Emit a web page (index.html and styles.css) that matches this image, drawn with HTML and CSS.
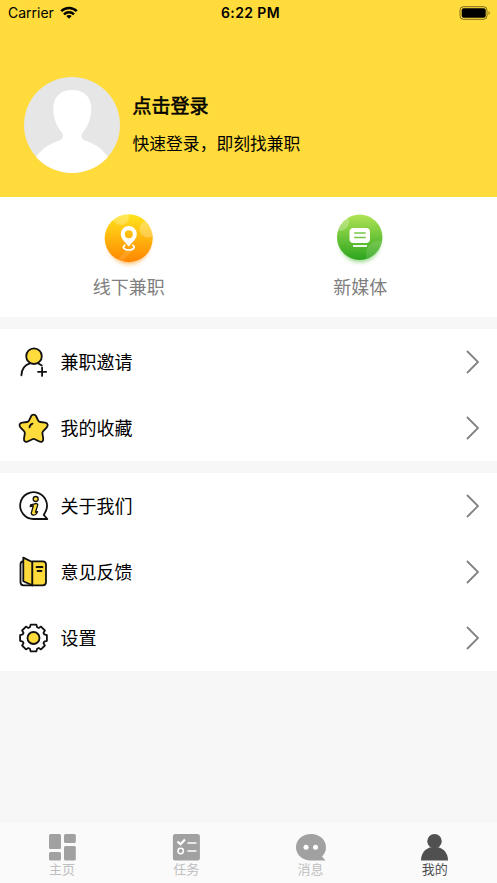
FILE: index.html
```html
<!DOCTYPE html>
<html lang="zh-CN">
<head>
<meta charset="utf-8">
<title>我的</title>
<link rel="stylesheet" href="styles.css">
</head>
<body>
<div class="app">
  <header class="header">
    <div class="status">
      <div class="carrier"><span>Carrier</span>
        <svg width="18" height="14" viewBox="0 0 18 14" fill="none" stroke="#000" stroke-width="2.5"><path d="M1.2 5.2C5.5.9 12.500.9 16.800 5.200M4 8.300c2.800-2.700 7.200-2.700 10 0"/><path d="M9 12.700 6.300 10c1.600-1.500 3.800-1.500 5.400 0z" fill="#000" stroke="none"/></svg>
      </div>
      <div class="time">6:22 PM</div>
      <svg class="battery" width="32" height="14" viewBox="0 0 32 14"><rect x="1" y=".7" width="27" height="12.600" rx="3.500" fill="none" stroke="#000" stroke-opacity=".5"/><rect x="2.700" y="2.200" width="24" height="9.600" rx="2"/><path d="M29.600 5c1.500.5 1.500 3.500 0 4z" opacity=".5"/></svg>
    </div>
    <div class="profile">
      <svg width="96" height="96" viewBox="0 0 96 96"><defs><clipPath id="avatar"><circle cx="48" cy="48" r="48"/></clipPath></defs><g clip-path="url(#avatar)"><path fill="#e6e6e6" d="M0 0h96v96H0z"/><path fill="#fff" d="M48.300 13C36.500 13 29.300 20 29.300 31.500c0 10 3.700 18.500 8.500 24 2.300 3 1.200 6.300-1.800 7.800C26 66.500 18 71.500 12 80v16h72V80c-6-8.500-14-13.500-23.500-16.700-3-1.500-4.200-4.800-1.800-7.800 5-5.500 8.600-14 8.600-24C67.300 20 60 13 48.300 13z"/></g></svg>
      <div class="who">
        <div class="login">点击登录</div>
        <div class="hint">快速登录，即刻找兼职</div>
      </div>
    </div>
  </header>

  <section class="entries">
    <div class="entry">
      <svg width="60" height="60" viewBox="0 0 60 60"><defs><linearGradient id="orange" x2="0" y2="1"><stop stop-color="#ffe51c"/><stop offset="1" stop-color="#ff8600"/></linearGradient><clipPath id="oc"><circle cx="29.700" cy="30.200" r="24"/></clipPath><filter id="soft" x="-30%" y="-30%" width="160%" height="160%"><feGaussianBlur stdDeviation="2"/></filter></defs>
        <circle cx="30" cy="35" r="21" fill="#ff9c20" opacity=".65" filter="url(#soft)"/><circle cx="29.700" cy="30.200" r="24" fill="url(#orange)"/>
        <g clip-path="url(#oc)" fill="#fff" opacity=".25"><circle cx="49" cy="21" r="8.500"/><circle cx="22" cy="9" r="8"/></g><path d="M29 41 18 52l5 1.500L38 38z" fill="#fff" opacity=".12"/>
        <path fill="#fff" fill-rule="evenodd" d="M29.800 18a8 8 0 0 0-8 8c0 5 4.500 8 8 12.500 3.500-4.500 8-7.500 8-12.500a8 8 0 0 0-8-8zm0 4.300a4 4 0 1 1 0 8 4 4 0 0 1 0-8z"/><path d="M26.500 37c-4 1.500-2 5 3.300 5s7.300-3.500 3.300-5" fill="none" stroke="#fff" stroke-width="1.700"/></svg>
      <span>线下兼职</span>
    </div>
    <div class="entry">
      <svg width="60" height="60" viewBox="0 0 60 60"><defs><linearGradient id="green" x2="0" y2="1"><stop stop-color="#b0e454"/><stop offset="1" stop-color="#2ba51e"/></linearGradient><clipPath id="gc"><circle cx="29.700" cy="29.200" r="22.700"/></clipPath></defs>
        <circle cx="30" cy="34" r="20" fill="#5bc044" opacity=".65" filter="url(#soft)"/><circle cx="29.700" cy="29.200" r="22.700" fill="url(#green)"/>
        <g clip-path="url(#gc)" fill="#fff"><circle cx="10" cy="14" r="9" opacity=".25"/><circle cx="49" cy="46" r="13" opacity=".13"/></g>
        <rect x="19.500" y="20" width="20.500" height="15" rx="4" fill="#fff"/><path d="M24.200 25h11.500M24.200 29.500h11.500" stroke="#75c647" stroke-width="1.500"/><path d="M23 38h14" stroke="#fff" stroke-width="1.800"/></svg>
      <span>新媒体</span>
    </div>
  </section>

  <section class="list">
    <div class="row">
      <svg class="icon" width="32" height="32" viewBox="0 0 32 32"><circle cx="16" cy="10.200" r="7.800" fill="#ffdb3b"/><path d="M3.400 29.300C3.600 23.500 6.500 19 12 17.300M20 17.200l3.800 2.300M20 25.800h8.200M24.100 21.700v8.200"/></svg>
      <span>兼职邀请</span><svg class="arrow" width="14" height="24" viewBox="0 0 14 24"><path d="m1 1 11 11L1 23"/></svg>
    </div>
    <div class="row">
      <svg class="icon" width="32" height="32" viewBox="0 0 32 32"><path fill="#ffdb3b" d="M13.200 4c1-1.900 3.800-1.900 4.800 0l2.200 4.600q.6 1.200 2 1.400l4.800.7c2.800.4 3.600 3 1.600 5l-3.400 3.500q-1 1-.8 2.400l.8 4.700c.4 3-1.800 4.300-4.300 3l-4.100-2.100q-1.200-.6-2.400 0l-4.100 2.100c-2.500 1.300-4.700 0-4.300-3l.8-4.700q.2-1.400-.8-2.400l-3.400-3.500c-2-2-1.200-4.600 1.600-5l4.800-.7q1.400-.2 2-1.400z"/><path d="M11.500 15.300q.3-2.700 3-3.700"/></svg>
      <span>我的收藏</span><svg class="arrow" width="14" height="24" viewBox="0 0 14 24"><path d="m1 1 11 11L1 23"/></svg>
    </div>
  </section>

  <section class="list">
    <div class="row">
      <svg class="icon" width="32" height="32" viewBox="0 0 32 32"><path d="M15.500 29A13.400 13.400 0 1 1 27 22.600L25.800 25l3.500 4z"/><g fill="#ffdb3b" stroke-width="1.300"><circle cx="17.700" cy="9" r="2.500"/><path d="m12.500 15 5.200-1.300c1.700-.4 2.300.4 1.900 1.800l-2.100 6.700 2-.6-1 2c-2 2.200-6 2-5-1.300l1.800-6.500-3 .7z"/></g></svg>
      <span>关于我们</span><svg class="arrow" width="14" height="24" viewBox="0 0 14 24"><path d="m1 1 11 11L1 23"/></svg>
    </div>
    <div class="row">
      <svg class="icon" width="32" height="32" viewBox="0 0 32 32"><path fill="#fff" d="M5 5.500C3 5.500 2.500 6.500 2.500 8.500V26c0 2.500 1 3.300 3 3.300h9"/><path fill="#ffdb3b" d="M14.200 5.300h10.500c2.300 0 3.300 1 3.300 3.300V26c0 2.300-1 3.300-3.300 3.300H14.200z"/><path fill="#ffdb3b" d="m5.300 1.600 8.900 4.400v23.300l-8.900-4z"/><path d="M18.500 11h6M19.500 15h4"/></svg>
      <span>意见反馈</span><svg class="arrow" width="14" height="24" viewBox="0 0 14 24"><path d="m1 1 11 11L1 23"/></svg>
    </div>
    <div class="row">
      <svg class="icon" width="32" height="32" viewBox="0 0 32 32"><g transform="translate(15.500 16)"><path d="M-2.800-13.400h5.600l.8 2.700 1.600.7 2.300-1.400 3.900 3.900-1.400 2.300.7 1.600 2.700.8v5.600l-2.700.8-.7 1.600 1.400 2.300-3.900 3.900-2.300-1.400-1.600.7-.8 2.700h-5.600l-.8-2.700-1.600-.7-2.300 1.400-3.900-3.900 1.400-2.300-.7-1.600-2.700-.8v-5.600l2.700-.8.700-1.600-1.400-2.300 3.900-3.900 2.300 1.400 1.600-.7z"/><circle r="6" fill="#ffdb3b"/></g></svg>
      <span>设置</span><svg class="arrow" width="14" height="24" viewBox="0 0 14 24"><path d="m1 1 11 11L1 23"/></svg>
    </div>
  </section>

  <nav class="tabs">
    <div class="tab">
      <svg width="32" height="28" viewBox="0 0 32 28" fill="#a1a1a1"><rect x="3" y="0" width="12" height="15" rx="1.500"/><rect x="18" y="0" width="11.800" height="9" rx="1.500"/><rect x="3" y="18" width="12" height="8.500" rx="1.500"/><rect x="18" y="12" width="11.800" height="14.500" rx="1.500"/></svg>
      <span>主页</span>
    </div>
    <div class="tab">
      <svg width="32" height="28" viewBox="0 0 32 28"><rect x="2.900" width="27" height="26.500" rx="2.500" fill="#a1a1a1"/><path d="m7.500 7.500 3 2.800 4.500-4.800" fill="none" stroke="#fff" stroke-width="2.200"/><path d="M17.500 9h9M17.500 17h9" stroke="#fff" stroke-width="1.500"/><circle cx="10.700" cy="17" r="2.700" fill="none" stroke="#fff" stroke-width="1.500"/></svg>
      <span>任务</span>
    </div>
    <div class="tab">
      <svg width="32" height="28" viewBox="0 0 32 28"><path fill="#a1a1a1" d="M16 0C7.500 0 1 5.500 1 13.200S7.500 26.500 16 26.500h14.500L27 22.500c2.500-2.500 4-5.500 4-9.300C31 5.500 24.500 0 16 0z"/><circle cx="11" cy="13.300" r="2.500" fill="#fff"/><circle cx="20.500" cy="13.300" r="2.500" fill="#fff"/></svg>
      <span>消息</span>
    </div>
    <div class="tab active">
      <svg width="32" height="28" viewBox="0 0 32 28" fill="#505050"><circle cx="15.500" cy="7.200" r="7.200"/><path d="M2 26.500C2 19 6.500 14.800 11.500 13.300h8c5 1.500 9.500 5.700 9.500 13.200z"/></svg>
      <span>我的</span>
    </div>
  </nav>
</div>
</body>
</html>
```
FILE: styles.css
```css
* { box-sizing: border-box; }
body { margin: 0; background: #f7f7f7; color: #000; font-family: "Noto Sans CJK SC", sans-serif; }
svg { display: block; flex: none; }
.app { height: 883px; display: flex; flex-direction: column; overflow: hidden; }

.header { height: 197px; background: #ffdb3b; flex: none; }
.status { height: 25px; padding: 0 6px 0 8px; display: grid; grid-template-columns: 1fr auto 1fr; align-items: center; font-family: Inter, sans-serif; line-height: 25px; }
.carrier { display: flex; align-items: center; gap: 6px; font-size: 14px; letter-spacing: 0; }
.time { font-size: 14px; font-weight: 600; letter-spacing: .4px; padding-left: 2px; }
.battery { justify-self: end; }
.profile { display: flex; align-items: center; gap: 12.5px; padding: 52px 24px 0; }
.who { padding-bottom: 4px; }
.login { font-size: 19px; line-height: 28px; -webkit-text-stroke: .55px #000; }
.hint { font-size: 16.8px; line-height: 26px; margin-top: 11px; }

.entries { height: 120px; flex: none; background: #fff; display: grid; grid-template-columns: 1fr 1fr; padding: 11px 21px 0 13px; margin-bottom: 12px; }
.entry { display: flex; flex-direction: column; align-items: center; font-size: 18px; line-height: 26px; color: #808080; }
.entry span { margin-top: 5px; }

.list { background: #fff; margin-bottom: 12px; flex: none; }
.row { height: 66px; display: flex; align-items: center; padding: 0 17px 0 18px; font-size: 18px; line-height: 26px; }
.row span { flex: 1; margin-left: 10.5px; padding-bottom: 2px; }
.icon { fill: none; stroke: #111; stroke-width: 1.8; stroke-linejoin: round; stroke-linecap: round; }
.arrow { fill: none; stroke: #828282; stroke-width: 1.8; }

.tabs { height: 60px; margin-top: auto; background: #fafafa; display: grid; grid-template-columns: repeat(4, 1fr); padding-top: 11px; flex: none; }
.tab { display: flex; flex-direction: column; align-items: center; font-size: 13px; line-height: 18px; color: #bfbfbf; }
.tab span { margin-top: -2px; }
.tab.active { color: #505050; }
```
